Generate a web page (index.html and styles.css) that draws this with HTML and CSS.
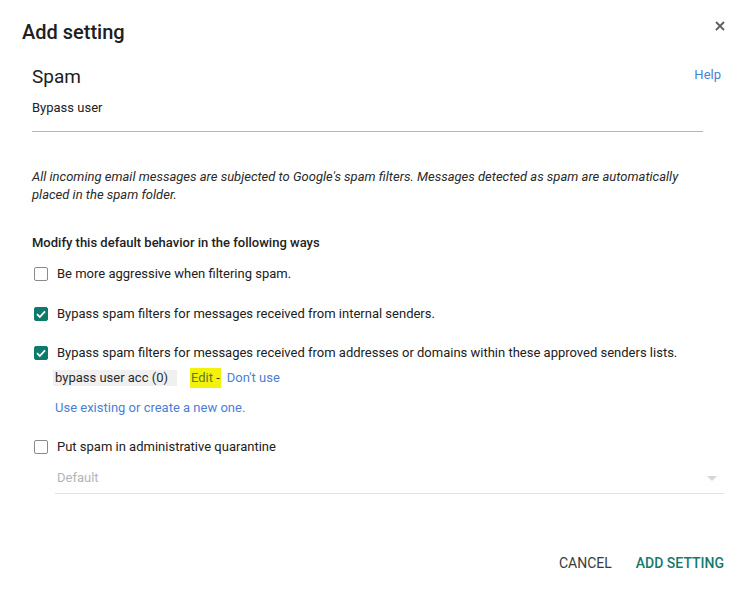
FILE: index.html
```html
<!DOCTYPE html>
<html>
<head>
<meta charset="utf-8">
<link rel="stylesheet" href="styles.css">
</head>
<body>
<div class="dialog">
  <div class="header">
    <h1 class="title">Add setting</h1>
    <button class="close" aria-label="Close">
      <svg width="10" height="10" viewBox="0 0 10 10"><path d="M1 1L9 9M9 1L1 9" stroke="#5f5f5f" stroke-width="1.8" fill="none"/></svg>
    </button>
  </div>
  <div class="content">
    <div class="section-head">
      <div class="section-title">Spam</div>
      <a class="link help">Help</a>
    </div>
    <div class="field">Bypass user</div>
    <p class="desc">All incoming email messages are subjected to Google's spam filters. Messages detected as spam are automatically placed in the spam folder.</p>
    <div class="subhead">Modify this default behavior in the following ways</div>
    <div class="row r1"><span class="cb"></span><span>Be more aggressive when filtering spam.</span></div>
    <div class="row r2"><span class="cb on"><svg width="14" height="14" viewBox="0 0 14 14"><path d="M3 7.2L5.8 10L11 4.4" stroke="#fff" stroke-width="1.8" fill="none"/></svg></span><span>Bypass spam filters for messages received from internal senders.</span></div>
    <div class="row r3"><span class="cb on"><svg width="14" height="14" viewBox="0 0 14 14"><path d="M3 7.2L5.8 10L11 4.4" stroke="#fff" stroke-width="1.8" fill="none"/></svg></span><span>Bypass spam filters for messages received from addresses or domains within these approved senders lists.</span></div>
    <div class="list-row">
      <span class="chip">bypass user acc (0)</span>
      <span class="hl"><span class="edit">Edit</span> -</span>
      <a class="link dont">Don't use</a>
    </div>
    <a class="link use">Use existing or create a new one.</a>
    <div class="row r4"><span class="cb"></span><span>Put spam in administrative quarantine</span></div>
    <div class="select">
      <span>Default</span>
      <svg width="10" height="5" viewBox="0 0 10 5"><path d="M0 0L10 0L5 5Z" fill="#d6d6d6"/></svg>
    </div>
  </div>
  <div class="actions">
    <button class="btn cancel">CANCEL</button>
    <button class="btn primary">ADD SETTING</button>
  </div>
</div>
</body>
</html>
```
FILE: styles.css
```css
* { box-sizing: border-box; }
html, body { margin: 0; padding: 0; background: #fff; }
body {
  font-family: Roboto, "Liberation Sans", Arial, sans-serif;
  color: #212121;
  font-size: 13px;
  line-height: 18px;
}
.dialog { width: 745px; height: 591px; }
.header {
  display: flex;
  justify-content: space-between;
  align-items: flex-start;
  padding: 20px 20px 0 22px;
}
.title {
  margin: 0;
  font-size: 20px;
  line-height: 24px;
  font-weight: 500;
  color: #202020;
}
.close {
  border: 0;
  background: none;
  padding: 0;
  margin-top: 1px;
  width: 10px;
  height: 10px;
  display: flex;
}
.content { padding: 0 21px 0 32px; }
.section-head {
  display: flex;
  justify-content: space-between;
  align-items: center;
  margin-top: 21px;
  height: 24px;
}
.section-title { font-size: 19px; line-height: 24px; color: #202020; }
.link { color: #4a7fd6; text-decoration: none; cursor: pointer; }
.help { margin-right: 3px; margin-top: -4px; }
.field {
  margin-top: 10px;
  margin-right: 21px;
  padding-bottom: 14px;
  border-bottom: 1px solid #b5b5b5;
}
.desc {
  margin: 36px 21px 0 0;
  font-style: italic;
  color: #2a2a2a;
}
.subhead { margin-top: 30px; font-weight: 500; color: #222; }
.row { display: flex; align-items: center; }
.r1 { margin-top: 13px; }
.r2 { margin-top: 22px; }
.r3 { margin-top: 21px; }
.r4 { margin-top: 21px; }
.cb {
  width: 14px;
  height: 14px;
  margin: 0 9px 0 2px;
  border: 1.5px solid #8a8a8a;
  border-radius: 2px;
  flex: none;
  display: flex;
}
.cb.on { background: #0e7a6b; border-color: #0e7a6b; }
.cb.on svg { margin: -1.5px; }
.list-row {
  display: flex;
  align-items: center;
  margin-top: 6px;
  margin-left: 21px;
  height: 20px;
}
.chip {
  background: #f0f0f0;
  padding: 0 9px 0 2px;
  line-height: 16px;
  color: #2a2a2a;
}
.hl {
  margin-left: 13px;
  background: #f2f20a;
  padding: 1px;
  color: #333;
}
.edit { color: #5e7a24; }
.dont { margin-left: 6px; }
.use { display: block; margin-top: 11px; margin-left: 23px; }
.select {
  margin-top: 13px;
  margin-left: 23px;
  padding: 0 7px 6px 2px;
  border-bottom: 1px solid #e3e3e3;
  display: flex;
  justify-content: space-between;
  align-items: center;
  color: #b5b5b5;
}
.actions {
  display: flex;
  justify-content: flex-end;
  gap: 24px;
  padding: 0 21px 0 0;
  margin-top: 60px;
}
.btn {
  border: 0;
  background: none;
  padding: 0;
  font-family: Roboto, "Liberation Sans", Arial, sans-serif;
  font-size: 14px;
  line-height: 18px;
  font-weight: 500;
}
.cancel { color: #3a3a3a; font-weight: 400; }
.primary { color: #147a6c; }
```
